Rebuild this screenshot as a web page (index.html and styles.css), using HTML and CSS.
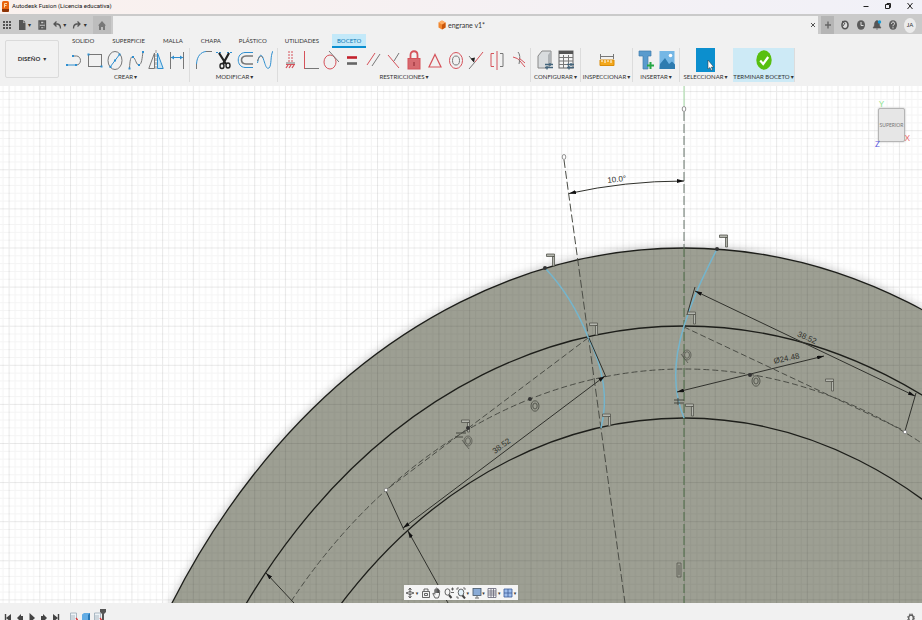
FILE: index.html
```
<!DOCTYPE html>
<html lang="es">

<head>
    <meta charset="UTF-8">
    <meta name="viewport" content="width=device-width, initial-scale=1.0">
    <title>Autodesk Fusion (Licencia educativa)</title>
    <link rel="stylesheet" href="styles.css">
</head>

<body>
    <!-- title bar -->
    <header class="titlebar">
        <svg class="logo" viewBox="0 0 7 11"><rect width="7" height="11" rx="1.5" fill="#e8640f"/><path d="M0 8h7v1.5a1.5 1.5 0 0 1-1.5 1.5h-4A1.5 1.5 0 0 1 0 9.5z" fill="#8c3306"/><path d="M2.5 6.5v-4h2.5M2.5 4.5h2" stroke="#ffd9a8" fill="none"/></svg>
        <span class="title">Autodesk Fusion (Licencia educativa)</span>
        <div class="window-buttons">
            <button aria-label="Minimizar"><svg viewBox="0 0 8 8"><path d="M1.5 4.5h5"/></svg></button>
            <button aria-label="Restaurar"><svg viewBox="0 0 8 8"><path d="M1.5 2.5h4v4h-4zM3 2.5v-1h3.5v4h-1"/></svg></button>
            <button aria-label="Cerrar"><svg viewBox="0 0 8 8"><path d="M1.5 1l5 6M6.5 1l-5 6"/></svg></button>
        </div>
    </header>

    <!-- quick access + document tab -->
    <div class="docbar">
        <div class="quick">
            <button aria-label="Panel de datos"><svg viewBox="0 0 10 10"><path d="M2 1v8M5 1v8M8 1v8" stroke="#555" stroke-width="2" stroke-dasharray="2 1" fill="none"/></svg></button>
            <button class="drop" aria-label="Archivo"><svg viewBox="0 0 10 10"><path d="M2 0h4v3h2.5v7H2z" fill="#555"/><path d="M6.5 0l2 2.5h-2z" fill="#555"/></svg><i>▾</i></button>
            <button aria-label="Guardar"><svg viewBox="0 0 10 10"><path d="M2 1h6.5v8H2zM3.5 1v3h3.5v-3M3.5 9V6.5h3.5V9" fill="none" stroke="#555" stroke-width="1.3"/></svg></button>
            <button class="drop" aria-label="Deshacer"><svg viewBox="0 0 10 10"><path d="M2 4h3.5q3 .5 3 4.5M4.5 1.5L2 4l2.5 2.5" fill="none" stroke="#555" stroke-width="1.3"/></svg><i>▾</i></button>
            <button class="drop" aria-label="Rehacer"><svg viewBox="0 0 10 10"><path d="M8 4H4.5q-3 .5-3 4.5M5.5 1.5L8 4 5.5 6.5" fill="none" stroke="#555" stroke-width="1.3"/></svg><i>▾</i></button>
            <button class="home" aria-label="Inicio"><svg viewBox="0 0 10 10"><path d="M5 1L1 5.5h1V10h2V7h2v3h2V5.5h1z" fill="#777"/></svg></button>
        </div>
        <div class="doc-tab">
            <div class="doc-name">
                <svg viewBox="0 0 8 10"><path d="M4 .5L7.5 2.5v5L4 9.5.5 7.5v-5z" fill="#f0862e"/><path d="M4 4.5l3.5-2v5L4 9.5z" fill="#c9560b"/><path d="M4 .5l3.5 2L4 4.5l-3.5-2z" fill="#ffae66"/></svg>
                <span>engrane v1*</span>
            </div>
            <button class="doc-close" aria-label="Cerrar documento"><svg viewBox="0 0 6 6"><path d="M1 1l4 4M5 1L1 5" stroke="#555" fill="none"/></svg></button>
        </div>
        <div class="account">
            <button class="plus" aria-label="Nuevo diseño"><svg viewBox="0 0 10 10"><path d="M5 1.5v7M2 5h6" stroke="#666" stroke-width="1.4"/></svg></button>
            <button aria-label="Extensiones"><svg viewBox="0 0 10 10"><ellipse cx="5" cy="5" rx="3" ry="3.8" fill="#ddd" stroke="#555" stroke-width="1.6"/><path d="M2 1l3 2.5M5 3l-2 3" stroke="#555"/></svg></button>
            <button aria-label="Estado de trabajos"><svg viewBox="0 0 10 10"><ellipse cx="5" cy="5" rx="4" ry="4.8" fill="#5c5c5c"/><path d="M5 2v3.5h2.5" stroke="#ddd" fill="none"/></svg></button>
            <button aria-label="Notificaciones"><svg viewBox="0 0 10 10"><path d="M5 .5C2.5 1 2.5 4 2.3 6L1 8h8L7.7 6C7.5 4 7.5 1 5 .5M4 9h2" fill="#555" stroke="#555" stroke-width=".6"/><circle cx="7.5" cy="2" r="1.7" fill="#169bd7"/></svg></button>
            <button aria-label="Ayuda"><svg viewBox="0 0 10 10"><ellipse cx="5" cy="5" rx="4" ry="4.8" fill="#5c5c5c"/><path d="M3.5 3.8C3.5 1.5 6.6 1.6 6.5 3.5 6.5 4.8 5 4.8 5 6.3M5 7.2v1.2" stroke="#eee" fill="none"/></svg></button>
            <button class="avatar">JA</button>
        </div>
    </div>

    <!-- ribbon -->
    <div class="ribbon">
        <button class="workspace">DISEÑO <i>▾</i></button>
        <div class="ribbon-main">
            <nav class="tabs">
                <a href="#">SOLIDO</a>
                <a href="#">SUPERFICIE</a>
                <a href="#">MALLA</a>
                <a href="#">CHAPA</a>
                <a href="#">PLÁSTICO</a>
                <a href="#" class="tools">UTILIDADES</a>
                <a href="#" class="active">BOCETO</a>
            </nav>
            <div class="groups">
                <section class="group create">
                    <div class="icons">
                        <svg viewBox="0 0 16 20"><path d="M1 15h9" stroke="#2f8fd0"/><path d="M7 6h3.500a4 4.500 0 0 1 0 9" stroke="#777"/><path d="M0 14h2v2H0zM9 14h2v2H9zM6 5h2v2H6z" fill="#2f8fd0"/></svg>
                        <svg viewBox="0 0 16 20"><rect x="1.5" y="4.5" width="13" height="12" stroke="#777"/><path d="M.5 3.500h2v2h-2zM13.500 15.500h2v2h-2z" fill="#2f8fd0"/></svg>
                        <svg viewBox="0 0 16 20"><ellipse cx="8" cy="10.5" rx="7" ry="9" stroke="#777"/><path d="M3.5 16.5l9-12" stroke="#2f8fd0"/><path d="M2.5 16h2v2h-2zM7 9.5h2v2H7zM11.5 3.5h2v2h-2z" fill="#2f8fd0"/></svg>
                        <svg viewBox="0 0 16 20"><path d="M1.5 18C2 9 3 6 5 7c3 2 3 8 6 8 3-1 3-7 4-13" stroke="#777"/><path d="M.5 17.5h2v2h-2zM4 6h2v2H4zM10 14h2v2h-2zM14 1h2v2h-2z" fill="#2f8fd0"/></svg>
                        <svg viewBox="0 0 16 20"><path d="M6.5 3v15.5H.8z" stroke="#777"/><path d="M9.5 3v15.5h5.7z" stroke="#2f8fd0" fill="#c6e4f5"/><path d="M8 0v20" stroke="#999" stroke-dasharray="3 1"/></svg>
                        <svg viewBox="0 0 16 20"><path d="M1.5 2v17M14.5 2v17" stroke="#777"/><path d="M2 7.500h12" stroke="#2f8fd0"/><path d="M2 7.5l3-2v4zM14 7.5l-3-2v4z" fill="#2f8fd0"/></svg>
                    </div>
                    <button>CREAR <i>▾</i></button>
                </section>
                <section class="group modify">
                    <div class="icons">
                        <svg viewBox="0 0 16 20"><path d="M.5 19v-5" stroke="#777"/><path d="M.5 14C1 6 5 2 10 1.5" stroke="#2f8fd0"/><path d="M10 1.5h6" stroke="#777"/></svg>
                        <svg viewBox="0 0 16 20"><path d="M0 2.500h6M11 2.500h5" stroke="#2f8fd0" stroke-dasharray="2 1"/><path d="M3 3l7 11M13 3L7 14" stroke="#222" stroke-width="2.2"/><ellipse cx="6" cy="16" rx="2" ry="2.5" stroke="#222" stroke-width="1.4"/><ellipse cx="12" cy="15.5" rx="2" ry="2.5" stroke="#222" stroke-width="1.4"/></svg>
                        <svg viewBox="0 0 16 20"><path d="M16 2.500H8C-1 3-1 17 8 17.500h8" stroke="#2f8fd0"/><path d="M16 6H9c-6 .5-6 7.500 0 8h7" stroke="#777" stroke-width="1.6"/></svg>
                        <svg viewBox="0 0 16 20"><path d="M.5 13C2 5 4 3 6 8s3 12 6 10c3-3 1-12 4-17" stroke="#2f8fd0"/><path d="M.5 11C2 6 4 5 6 8" stroke="#777"/></svg>
                    </div>
                    <button>MODIFICAR <i>▾</i></button>
                </section>
                <section class="group restrict">
                    <div class="icons red">
                        <svg viewBox="0 0 16 20"><path d="M7 1v12M10 1v12" stroke-dasharray="2 1"/><path d="M4 14.500h9"/><path d="M4 18l2-3M7 18l2-3M10 18l2-3" stroke-width="1.3"/><path d="M4 13h9" stroke="#777"/></svg>
                        <svg viewBox="0 0 16 20"><path d="M1.5 1v18"/><path d="M2 18.5h14" stroke="#777"/></svg>
                        <svg viewBox="0 0 16 20"><ellipse cx="7" cy="12" rx="6" ry="7"/><path d="M6 1l10 11" stroke="#777"/></svg>
                        <svg viewBox="0 0 16 20"><path d="M3 7.500h10" stroke="#c3212c" stroke-width="2.6"/><path d="M3 13.500h10" stroke="#666" stroke-width="2.6"/></svg>
                        <svg viewBox="0 0 16 20"><path d="M2 15L10 3"/><path d="M7 16l8-12" stroke="#777"/></svg>
                        <svg viewBox="0 0 16 20"><path d="M2 5l11 13"/><path d="M8 11l5-8" stroke="#777"/></svg>
                        <svg viewBox="0 0 16 20"><path d="M4.5 9V5c0-5 7-5 7 0v4" stroke-width="1.8"/><rect x="2" y="8.5" width="12" height="10.5" fill="#d66a70"/><path d="M8 12v4" stroke="#8c2630"/></svg>
                        <svg viewBox="0 0 16 20"><path d="M8 4.5L14 17H2z" stroke-width="1.2"/></svg>
                        <svg viewBox="0 0 16 20"><ellipse cx="8" cy="10.5" rx="6.5" ry="8"/><ellipse cx="8" cy="10.5" rx="3.5" ry="4.5" stroke="#777"/></svg>
                        <svg viewBox="0 0 16 20"><path d="M7 12l8-10"/><path d="M1 19l6-7M1 6l5 6" stroke="#777"/><path d="M2.5 8.500l4.500-1-1 5z" fill="#222" stroke="none"/></svg>
                        <svg viewBox="0 0 16 20"><path d="M5 3.500H2v13h3M8 1v19"/><path d="M11 3.500h3v13h-3" stroke="#777"/></svg>
                        <svg viewBox="0 0 16 20"><path d="M3 7q5 1 7 4l5 6"/><path d="M8 2q3 3 1 12" stroke="#777"/><path d="M9 8l6 5"/></svg>
                    </div>
                    <button>RESTRICCIONES <i>▾</i></button>
                </section>
                <section class="group config">
                    <div class="icons">
                        <svg viewBox="0 0 16 20"><path d="M1 6l4-5h9v13l-3 4H1z" fill="#d9dcde" stroke="#888"/><path d="M11 5l3-4v13l-3 4z" fill="#aeb2b5"/><path d="M8 14.5h8M8 17.5h8M13 13v3M10 16v3.5" stroke="#44657c" stroke-width="1.3"/></svg>
                        <svg viewBox="0 0 16 20"><rect x="1" y="1" width="14" height="17" fill="#f4f4f4" stroke="#666"/><path d="M1 2.5h14" stroke="#555" stroke-width="3"/><path d="M1 7.5h14M1 11h14M1 14.5h14M5.5 5v13M10.5 5v13" stroke="#777"/><path d="M9 14.5h7M9 17.5h7M13 13v3M11 16v3.5" stroke="#44657c" stroke-width="1.3"/></svg>
                    </div>
                    <button>CONFIGURAR <i>▾</i></button>
                </section>
                <section class="group inspect">
                    <div class="icons">
                        <svg viewBox="0 0 16 20"><path d="M1.5 4v5M14.5 4v5M2 6.5h12" stroke="#777"/><path d="M1 10h14v5.5H1z" fill="#f3a81c" stroke="#d98b08"/><path d="M3 10v2M6 10v3M9 10v2M12 10v3" stroke="#fff"/></svg>
                    </div>
                    <button>INSPECCIONAR <i>▾</i></button>
                </section>
                <section class="group insert">
                    <div class="icons">
                        <svg viewBox="0 0 16 20"><path d="M1 1h12v5h-3v13H5V6H1z" fill="#5a9bcd" stroke="#3f7dac" stroke-width=".7"/><path d="M12.5 12v7M9 15.5h7" stroke="#27a745" stroke-width="2"/></svg>
                        <svg viewBox="0 0 16 20"><rect x=".5" y="1" width="15" height="18" fill="#75b7e5"/><path d="M1 14l5-6 4 6 3-2.5 3 3V19H.5z" fill="#2e7cb0"/><circle cx="11.5" cy="5.5" r="1.8" fill="#fff"/></svg>
                    </div>
                    <button>INSERTAR <i>▾</i></button>
                </section>
                <section class="group select">
                    <div class="icons">
                        <svg class="wide" viewBox="0 0 19 24"><rect width="19" height="24" fill="#0c8fce"/><path d="M12 12v9l2-1.5 1.2 3 1.2-.7-1-2.8h2.3z" fill="#fff" stroke="#333" stroke-width=".5"/></svg>
                    </div>
                    <button>SELECCIONAR <i>▾</i></button>
                </section>
                <section class="group finish">
                    <div class="icons">
                        <svg viewBox="0 0 16 20"><ellipse cx="8" cy="10" rx="7.7" ry="9.7" fill="#58bf10"/><path d="M4.2 10.5l3 3.5 5-7" stroke="#fff" stroke-width="2.2"/></svg>
                    </div>
                    <button>TERMINAR BOCETO <i>▾</i></button>
                </section>
            </div>
        </div>
    </div>

    <!-- sketch canvas -->
    <main class="canvas">
        <svg class="sketch" viewBox="0 86 922 517" preserveAspectRatio="xMidYMid slice">
            <defs>
                <pattern id="grid" x="684" y="247.5" width="30.7" height="39.1" patternUnits="userSpaceOnUse">
                    <path d="M6.6 0v39.1M12.8 0v39.1M18.9 0v39.1M25.1 0v39.1M0 8.3h30.7M0 16.1h30.7M0 24h30.7M0 31.8h30.7" stroke="#000" stroke-opacity=".045"/>
                    <path d="M.5 0v39.1M0 .5h30.7" stroke="#000" stroke-opacity=".085"/>
                </pattern>
                <marker id="arrow" viewBox="0 0 7 4" refX="7" refY="2" markerWidth="7" markerHeight="4" markerUnits="userSpaceOnUse" orient="auto-start-reverse">
                    <path d="M7 2L0 0v4z" fill="#111"/>
                </marker>
                <filter id="soft"><feGaussianBlur stdDeviation="4"/></filter>
                <g id="perp" fill="#b4b6ae" stroke="#55574f" stroke-width=".8">
                    <path d="M-4.5-6h8v2.5h-8zM1.5-3.5h2V6h-2z"/>
                </g>
                <g id="conc" fill="none" stroke="#44463f" stroke-width=".8">
                    <ellipse rx="4" ry="5.2"/><ellipse rx="2.2" ry="3"/>
                </g>
                <g id="tang" fill="none" stroke="#55574f" stroke-width=".8">
                    <ellipse rx="4" ry="5"/><ellipse rx="2.5" ry="3.3"/><path d="M-6-1L1 8"/>
                </g>
            </defs>

            <rect y="86" width="922" height="517" fill="#fff"/>
            <ellipse cx="684" cy="1023" rx="610" ry="777" fill="#333" opacity=".25" filter="url(#soft)"/>
            <ellipse cx="684" cy="1023" rx="609" ry="775" fill="#9d9f93"/>
            <rect y="86" width="922" height="517" fill="url(#grid)"/>

            <g class="edges">
                <ellipse cx="684" cy="1023" rx="609" ry="775"/>
                <ellipse cx="684" cy="1023" rx="548" ry="697"/>
                <ellipse cx="684" cy="1023" rx="475.5" ry="605"/>
            </g>

            <!-- construction lines -->
            <path d="M684 86v20" stroke="#a5dba5"/>
            <path d="M684 112v136" class="axis"/>
            <path d="M684 248v355" class="axis green"/>
            <g class="construction">
                <ellipse cx="684" cy="1023" rx="514" ry="654"/>
                <path d="M564 160L625 603" stroke-dasharray="8 3"/>
                <path d="M588 338L386 490M684 327L905 431"/>
            </g>

            <g class="profile">
                <path d="M545 268C562 286 577 309 588 337C603 367 609 397 601 428"/>
                <path d="M717 249C705 273 694 294 684 326C674 358 672 390 684 418"/>
            </g>

            <!-- dimensions -->
            <g class="dims">
                <path d="M569 193.5Q625 181 684 181" marker-start="url(#arrow)" marker-end="url(#arrow)"/>
                <path d="M695 291L915 396" marker-start="url(#arrow)" marker-end="url(#arrow)"/>
                <path d="M677 392L824 356" marker-start="url(#arrow)" marker-end="url(#arrow)"/>
                <path d="M605 376L403 528" marker-start="url(#arrow)" marker-end="url(#arrow)"/>
                <path d="M408 531L448 603" marker-start="url(#arrow)"/>
                <path d="M266 573L294 603" marker-start="url(#arrow)"/>
                <path d="M386 491l18 39M589 338l17 39M695 287l-8 28M916 393l-11 38"/>
            </g>
            <g class="values">
                <text transform="translate(617 182) rotate(-6)">10.0°</text>
                <text transform="translate(806 340) rotate(24)">38.52</text>
                <text transform="translate(787 361) rotate(-12)">Ø24.48</text>
                <text transform="translate(503 448) rotate(-37)">38.52</text>
            </g>

            <!-- constraint glyphs -->
            <use href="#perp" x="551" y="260"/>
            <use href="#perp" x="724" y="241"/>
            <use href="#perp" x="594" y="329"/>
            <use href="#perp" x="692" y="318"/>
            <use href="#perp" x="607" y="420"/>
            <use href="#perp" x="690" y="410"/>
            <use href="#perp" x="830" y="385"/>
            <use href="#perp" x="466" y="426"/>
            <use href="#conc" x="756" y="381"/>
            <use href="#conc" x="535" y="406"/>
            <use href="#tang" x="687" y="355"/>
            <use href="#tang" x="468" y="441"/>
            <path d="M674 400h10M674 403h10M678 398v7M456 433h10M455 437h8" fill="none" stroke="#44463f"/>
            <path d="M677 563h4v14h-4zM679 565v10" fill="none" stroke="#55574f" stroke-width=".8"/>

            <g fill="#333">
                <circle cx="545" cy="268" r="2"/><circle cx="717" cy="249" r="2"/>
                <circle cx="750" cy="375" r="2"/><circle cx="530" cy="399" r="2"/><circle cx="468" cy="428" r="2"/>
            </g>
            <g fill="#fff" stroke="#777" stroke-width=".8">
                <ellipse cx="684" cy="109" rx="1.8" ry="2.5"/><ellipse cx="564" cy="157" rx="1.8" ry="2.5"/>
                <circle cx="386" cy="490" r="1.8"/><circle cx="905" cy="432" r="1.8"/>
            </g>
        </svg>

        <div class="viewcube">
            <span class="axis-y">Y</span>
            <button>SUPERIOR</button>
            <span class="axis-z">Z</span>
            <span class="axis-x">X</span>
        </div>

        <div class="navbar">
            <button class="drop" aria-label="Órbita"><svg viewBox="0 0 10 12"><path d="M5 1v10M1 6q4-3 8 0-4 3-8 0M3.5 3L5 1l1.5 2M3.5 9L5 11l1.5-2"/></svg><i>▾</i></button>
            <button aria-label="Mirar a"><svg viewBox="0 0 10 12"><path d="M1.5 4.5h7v6h-7zM3 4V2h4v2M3.5 6.5h3v2h-3z"/></svg></button>
            <button aria-label="Encuadre"><svg viewBox="0 0 10 12"><path d="M3 11L.8 6.5q1-.8 2 .8V2.5q.8-1 1.2 0V6 1.5q.8-1 1.3 0V6 2q.8-.8 1.2 0v4-2.5q1-.8 1.2.5 0 5-1.5 7z"/></svg></button>
            <button aria-label="Zoom"><svg viewBox="0 0 10 12"><ellipse cx="3.5" cy="5" rx="2.5" ry="3.2"/><path d="M5 8l2.5 3" stroke-width="2"/><path d="M7 2h3M8.5.5v3M7 5.5h3"/></svg></button>
            <button class="drop" aria-label="Ajustar"><svg viewBox="0 0 10 12"><path d="M1 3V1h2M7 1h2v2M1 9v2h2" stroke="#555"/><ellipse cx="5" cy="5.5" rx="2.8" ry="3.5" fill="#e3f1fa"/><path d="M6.5 8.5l2.5 3" stroke-width="2"/></svg><i>▾</i></button>
            <button class="drop" aria-label="Visualización"><svg viewBox="0 0 10 12"><rect x="1" y="1.5" width="8" height="7" fill="#8aabd6" stroke="#456"/><path d="M5 9v1.5M3 11h4"/></svg><i>▾</i></button>
            <button class="drop" aria-label="Rejilla"><svg viewBox="0 0 10 12"><path d="M1 1.5h8v9H1zM1 4h8M1 6h8M1 8h8M4 1.5v9M6.5 1.5v9" stroke="#667"/></svg><i>▾</i></button>
            <button class="drop" aria-label="Ventanas"><svg viewBox="0 0 10 12"><path d="M1 2h8v8H1zM5 2v8M1 6h8" fill="#9dbdeb" stroke="#3a5c98"/></svg><i>▾</i></button>
        </div>
    </main>

    <!-- timeline -->
    <footer class="timeline">
        <button aria-label="Inicio"><svg viewBox="0 0 8 10"><path d="M1.5 1v8" stroke="#444" stroke-width="1.4"/><path d="M7 1v8L2 5z" fill="#444"/></svg></button>
        <button aria-label="Anterior"><svg viewBox="0 0 8 10"><path d="M5 1v8L1 5zM7 3v4H4V3z" fill="#444"/></svg></button>
        <button aria-label="Reproducir"><svg viewBox="0 0 8 10"><path d="M1.5 0v10L7 5z" fill="#444"/></svg></button>
        <button aria-label="Siguiente"><svg viewBox="0 0 8 10"><path d="M3 1v8l4-4zM1 3v4h3V3z" fill="#444"/></svg></button>
        <button aria-label="Final"><svg viewBox="0 0 8 10"><path d="M6.5 1v8" stroke="#444" stroke-width="1.4"/><path d="M1 1v8l5-4z" fill="#444"/></svg></button>
        <div class="features">
            <svg viewBox="0 0 8 12"><path d="M.5 1h6v10h-6zM2 3v6M4 3v6" fill="#eef3f7" stroke="#99a9b6" stroke-width=".8"/><path d="M6 6l2 2.5" stroke="#d33" stroke-width="1.3"/></svg>
            <svg viewBox="0 0 8 12"><path d="M0 2.5L2 1h6v8l-2 3H0z" fill="#64ade5"/><path d="M6 3l2-2v8l-2 3z" fill="#2778b5"/></svg>
            <svg viewBox="0 0 8 12"><path d="M.5 1h6v10h-6zM2 3v6M4 3v6" fill="#eef3f7" stroke="#99a9b6" stroke-width=".8"/><path d="M6 6l2 2.5" stroke="#d33" stroke-width="1.3"/></svg>
            <svg class="playhead" viewBox="0 0 8 12"><path d="M1 0h6v3L5 5v7H3V5L1 3z" fill="#555"/></svg>
        </div>
        <button class="settings" aria-label="Ajustes"><svg viewBox="0 0 8 10"><ellipse cx="4" cy="5" rx="2.3" ry="3" stroke="#555" stroke-width="1.3" fill="none"/><ellipse cx="4" cy="5" rx="3.3" ry="4.2" stroke="#555" stroke-dasharray="1.5 1.5" fill="none"/></svg></button>
    </footer>
</body>

</html>
```
FILE: styles.css
```
* {
    margin: 0;
    padding: 0;
    box-sizing: border-box;
}

body {
    display: flex;
    flex-direction: column;
    height: 100vh;
    overflow: hidden;
    background-color: #f1f1f1;
    color: #333;
    font-family: Lato, "Liberation Sans", sans-serif;
    font-size: 6px;
    line-height: 8px;
}

button {
    display: flex;
    align-items: center;
    justify-content: center;
    border: 0;
    background: none;
    color: inherit;
    font: inherit;
    white-space: nowrap;
}

a {
    color: inherit;
    text-decoration: none;
}

svg {
    display: block;
    flex: none;
}

i {
    font-family: "DejaVu Sans", sans-serif;
    font-size: 6px;
    font-style: normal;
}

/* title bar */
.titlebar {
    display: flex;
    align-items: center;
    height: 16px;
    padding: 0 4px 2px 2px;
    border-bottom: 2px solid #cacaca;
    background: linear-gradient(90deg, #faf1ee, #f1f1f8);
}

.logo {
    width: 7px;
    height: 11px;
}

.title {
    margin-left: 3px;
    color: #111;
    font-family: Roboto, sans-serif;
    font-size: 6px;
}

.window-buttons {
    display: flex;
    gap: 6px;
    margin-left: auto;
}

.window-buttons button {
    width: 16px;
}

.window-buttons svg {
    width: 8px;
    height: 8px;
    fill: none;
    stroke: #222;
}

/* document bar */
.docbar {
    display: flex;
    height: 18px;
    background-color: #cacaca;
}

.quick {
    display: flex;
    align-items: center;
    width: 113px;
    padding: 0 2px;
    justify-content: space-between;
}

.quick svg,
.account svg {
    width: 10px;
    height: 10px;
}

.quick .drop i {
    width: 6px;
}

.quick .home {
    width: 18px;
    height: 18px;
    background-color: #bdbdbd;
}

.doc-tab {
    display: flex;
    flex: 1;
    align-items: center;
    padding-right: 2px;
    background-color: #f1f1f1;
}

.doc-name {
    display: flex;
    flex: 1;
    align-items: center;
    justify-content: center;
    gap: 2px;
    font-size: 7px;
}

.doc-name svg {
    width: 8px;
    height: 10px;
}

.doc-close svg {
    width: 6px;
    height: 6px;
}

.account {
    display: flex;
    align-items: center;
    gap: 6px;
    padding: 0 6px 0 3px;
}

.account .plus {
    width: 13px;
    height: 18px;
    background-color: #b5b5b5;
}

.account .avatar {
    width: 12px;
    height: 15px;
    border-radius: 50%;
    background-color: #ececec;
}

/* ribbon */
.ribbon {
    display: flex;
    height: 52px;
    padding-left: 5px;
}

.workspace {
    width: 54px;
    height: 38px;
    margin-top: 6px;
    border: 1px solid #dadada;
    border-radius: 2px;
    font-weight: bold;
    gap: 3px;
}

.ribbon-main {
    flex: 1;
    padding-left: 3px;
}

.tabs {
    display: flex;
    gap: 8px;
    height: 14px;
    padding-left: 5px;
    line-height: 14px;
}

.tabs a {
    padding: 0 5px;
}

.tabs .active {
    border-bottom: 2px solid #0b8fd0;
    background-color: #c3e9f9;
    color: #0b78b5;
    line-height: 14px;
}

.groups {
    display: flex;
}

.group {
    height: 34px;
    padding: 2px 4px 0;
    border-right: 1px solid #dcdcdc;
}

.icons {
    display: flex;
    justify-content: space-between;
    height: 20px;
}

.icons svg {
    width: 16px;
    height: 20px;
    fill: none;
}

.icons.red svg {
    stroke: #d5525a;
}

.group button {
    width: 100%;
    height: 10px;
    margin-top: 2px;
    gap: 1px;
}

.create {
    width: 128px;
}

.modify {
    width: 88px;
    padding-left: 6px;
}

.restrict {
    width: 253px;
}

.config {
    width: 50px;
}

.inspect {
    width: 52px;
}

.insert {
    width: 47px;
}

.select {
    width: 51px;
    border-right: 0;
}

.finish {
    width: 62px;
    margin-left: 2px;
    background-color: #cdeaf6;
}

.config .icons,
.insert .icons {
    justify-content: center;
    gap: 5px;
}

.inspect .icons,
.select .icons,
.finish .icons {
    justify-content: center;
    align-items: center;
}

.icons .wide {
    width: 19px;
    height: 24px;
}

/* sketch canvas */
.canvas {
    position: relative;
    flex: 1;
    min-height: 0;
    overflow: hidden;
}

.sketch {
    width: 100%;
    height: 100%;
}

.edges {
    fill: none;
    stroke: #1d1e1a;
    stroke-width: 1.3px;
}

.axis {
    stroke: #66746b;
    stroke-dasharray: 9 3;
}

.axis.green {
    stroke: #4a6b45;
}

.construction {
    fill: none;
    stroke: #4b4d46;
    stroke-dasharray: 6 3;
}

.profile {
    fill: none;
    stroke: #74b5cd;
    stroke-width: 1.5px;
}

.dims {
    fill: none;
    stroke: #30312c;
    stroke-width: 1px;
}

.values {
    fill: #30312c;
    font-family: "Liberation Sans", sans-serif;
    font-size: 8px;
    text-anchor: middle;
}

.viewcube {
    position: absolute;
    top: 22px;
    right: 17px;
}

.viewcube button {
    width: 27px;
    height: 34px;
    border: 1px solid #b5b5b5;
    border-radius: 2px;
    background-color: #e6e6e6;
    box-shadow: 0 0 2px #bbb;
    color: #777;
    font-size: 5px;
}

.viewcube span {
    position: absolute;
    font-size: 8px;
}

.viewcube .axis-y {
    top: -8px;
    left: 1px;
    color: #8be38b;
}

.viewcube .axis-z {
    bottom: -6px;
    left: -3px;
    color: #5a5ae0;
}

.viewcube .axis-x {
    right: -5px;
    bottom: 0;
    color: #e86a6a;
}

.navbar {
    position: absolute;
    bottom: 3px;
    left: 50%;
    display: flex;
    align-items: center;
    justify-content: space-between;
    width: 114px;
    height: 15px;
    padding: 0 1px;
    transform: translateX(-50%);
    background-color: #f5f5f5;
}

.navbar svg {
    width: 10px;
    height: 12px;
    fill: none;
    stroke: #444;
    stroke-width: .8px;
}

.navbar i {
    width: 4px;
    font-size: 5px;
}

/* timeline */
.timeline {
    display: flex;
    align-items: flex-start;
    gap: 4px;
    height: 17px;
    padding: 10px 7px 0 4px;
    overflow: hidden;
}

.timeline svg {
    width: 8px;
    height: 10px;
}

.features {
    display: flex;
    gap: 4px;
    margin: -1px 0 0 6px;
}

.features svg {
    height: 12px;
}

.features .playhead {
    margin: -3px 0 0 -7px;
}

.settings {
    margin-left: auto;
}
```
